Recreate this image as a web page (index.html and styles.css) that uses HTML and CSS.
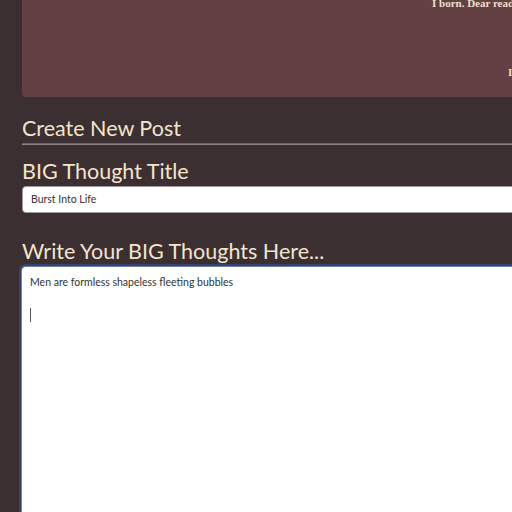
FILE: index.html
```html
<!DOCTYPE html>
<html>
<head>
<meta charset="utf-8">
<link rel="stylesheet" href="styles.css">
</head>
<body>
<div class="page">
  <div class="card">
    <p class="quote q1">I born. Dear reader</p>
    <p class="quote q2">I</p>
  </div>
  <h2 class="heading">Create New Post</h2>
  <hr class="rule">
  <h3 class="label">BIG Thought Title</h3>
  <div class="input">Burst Into Life</div>
  <h3 class="label label-body">Write Your BIG Thoughts Here...</h3>
  <div class="textarea">
    <p class="line">Men are formless shapeless fleeting bubbles</p>
    <p class="line">&nbsp;</p>
    <p class="line"><span class="caret"></span></p>
  </div>
</div>
</body>
</html>
```
FILE: styles.css
```css
html, body {
  margin: 0;
  padding: 0;
  background: #3c2f31;
  overflow: hidden;
  width: 512px;
  height: 512px;
}
.page {
  width: 600px;
  padding-left: 22px;
  font-family: Lato, "Open Sans", sans-serif;
}
.card {
  height: 97px;
  background: #634044;
  border-radius: 0 0 0 4px;
  position: relative;
}
.quote {
  margin: 0;
  font-family: "Liberation Serif", "DejaVu Serif", serif;
  font-weight: bold;
  font-size: 11px;
  color: #f1dfca;
  position: absolute;
  white-space: nowrap;
}
.q1 { left: 410px; top: -3px; }
.q2 { left: 486px; top: 66px; }
.heading {
  margin: 17px 0 0;
  font-size: 21.5px;
  font-weight: 400;
  line-height: 29px;
  color: #f3e4cc;
}
.rule {
  margin: 0;
  border: 0;
  border-top: 1px solid #6c6365;
  border-bottom: 1px solid #8a8284;
  width: 600px;
}
.label {
  margin: 10px 0 0;
  font-size: 21.5px;
  font-weight: 400;
  line-height: 32px;
  color: #f3e4cc;
}
.label-body { margin-top: 22px; }
.input {
  margin-top: -1px;
  height: 27px;
  box-sizing: border-box;
  background: #fff;
  border-radius: 4px;
  border: 1px solid #9e9a9b;
  padding: 0 8px;
  font-size: 10.5px;
  line-height: 25px;
  color: #333;
}
.textarea {
  margin-top: 0;
  height: 260px;
  background: #fff;
  border-radius: 4px;
  box-shadow: 0 0 0 1px #6d80b0, 0 0 0 3px #37426a;
  padding: 7px 8px;
  font-size: 10.5px;
  color: #333;
}
.line {
  margin: 0;
  line-height: 16.5px;
}
.caret {
  display: inline-block;
  width: 1px;
  height: 14px;
  background: #555;
  vertical-align: -3px;
}
```
